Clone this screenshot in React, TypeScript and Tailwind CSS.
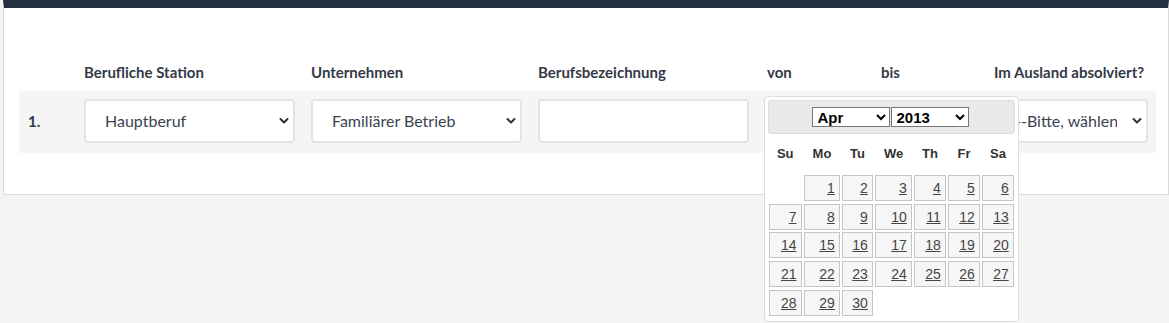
import { useState } from 'react';

const months = ['Jan', 'Feb', 'Mar', 'Apr', 'May', 'Jun', 'Jul', 'Aug', 'Sep', 'Oct', 'Nov', 'Dec'];
const years = Array.from({ length: 30 }, (_, i) => 2000 + i);
const weekdays = ['Su', 'Mo', 'Tu', 'We', 'Th', 'Fr', 'Sa'];

// April 2013 starts on a Monday
const days: (number | null)[] = [null, ...Array.from({ length: 30 }, (_, i) => i + 1)];

function Chevron() {
  return (
    <svg
      className="pointer-events-none absolute right-[6px] top-1/2 -translate-y-1/2"
      width="10"
      height="7"
      viewBox="0 0 10 7"
      fill="none"
    >
      <path d="M1.5 1.5L5 5l3.5-3.5" stroke="#2b3340" strokeWidth="2" strokeLinecap="round" strokeLinejoin="round" />
    </svg>
  );
}

function SelectBox({ value, options, pr = 'pr-[36px]' }: { value: string; options: string[]; pr?: string }) {
  return (
    <div className="relative w-full">
      <select
        defaultValue={value}
        className={`h-[44px] w-full appearance-none rounded-[4px] border-2 border-[#dfe5ec] bg-white pl-[19px] ${pr} text-[16px] text-[#3a4352] outline-none`}
      >
        {options.map((o) => (
          <option key={o}>{o}</option>
        ))}
      </select>
      <Chevron />
    </div>
  );
}

function DatePicker() {
  const [month, setMonth] = useState('Apr');
  const [year, setYear] = useState('2013');
  return (
    <div className="absolute left-[5px] top-0 z-10 w-[255px] rounded-[4px] border border-[#dddddd] bg-white p-[3px] pb-[5px] font-['Liberation_Sans',Arial,sans-serif] text-[#333333]">
      <div className="flex h-[34px] items-center justify-center gap-[1px] rounded-[3px] border border-[#dddddd] bg-[#e9e9e9] pr-[3px]">
        <select
          value={month}
          onChange={(e) => setMonth(e.target.value)}
          className="h-[20px] w-[78px] border border-[#767676] bg-white pl-[1px] text-[15px] font-bold text-black"
        >
          {months.map((m) => (
            <option key={m}>{m}</option>
          ))}
        </select>
        <select
          value={year}
          onChange={(e) => setYear(e.target.value)}
          className="h-[20px] w-[78px] border border-[#767676] bg-white pl-[1px] text-[15px] font-bold text-black"
        >
          {years.map((y) => (
            <option key={y}>{y}</option>
          ))}
        </select>
      </div>
      <div className="grid h-[40px] grid-cols-[32.5px_35.7px_30.4px_36.4px_31.4px_31.4px_31.4px] items-center gap-x-[2.6px] pl-[1px] text-[13px] font-bold">
        {weekdays.map((d) => (
          <div key={d} className="text-center">
            {d}
          </div>
        ))}
      </div>
      <div className="mt-[1px] grid grid-cols-[32.5px_35.7px_30.4px_36.4px_31.4px_31.4px_31.4px] gap-x-[2.6px] gap-y-[2.7px] pl-[1px]">
        {days.map((d, i) =>
          d === null ? (
            <div key={i} className="h-[26px]" />
          ) : (
            <a
              key={i}
              href="#"
              className="h-[26px] border border-[#c5c5c5] bg-[#f6f6f6] pr-[4px] text-right text-[14px] leading-[24px] text-[#454545] underline"
            >
              {d}
            </a>
          )
        )}
      </div>
    </div>
  );
}

export default function App() {
  return (
    <div className="h-[323px] w-[1169px] overflow-hidden bg-[#f4f4f4] font-['Lato','Noto_Sans',sans-serif]">
      <div className="ml-[3px] w-[1166px] border border-t-8 border-[#dadada] border-t-[#253142] bg-white pb-[41px] pl-[15px] pt-[52px]">
        {/* header */}
        <div className="flex h-[24px] items-center whitespace-nowrap text-[15px] font-bold text-[#333a47]">
          <div className="w-[57px]" />
          <div className="w-[227px] px-2">Berufliche Station</div>
          <div className="w-[227px] px-2">Unternehmen</div>
          <div className="w-[229px] px-2">Berufsbezeichnung</div>
          <div className="w-[114px] px-2">von</div>
          <div className="w-[113px] px-2">bis</div>
          <div className="w-[170px] px-2">Im Ausland absolviert?</div>
        </div>

        {/* row */}
        <div className="mt-[7px] flex w-[1137px] items-center bg-[#f5f5f5] pb-[10px] pt-[8px]">
          <div className="w-[57px] pl-[9px] text-[15px] font-bold text-[#333a47]">1.</div>
          <div className="w-[227px] px-2">
            <SelectBox value="Hauptberuf" options={['Hauptberuf', 'Nebenberuf']} />
          </div>
          <div className="w-[227px] px-2">
            <SelectBox value="Familiärer Betrieb" options={['Familiärer Betrieb', 'Fremdbetrieb']} />
          </div>
          <div className="w-[229px] px-2">
            <input className="h-[44px] w-[211px] rounded-[4px] border-2 border-[#dfe5ec] bg-white px-3 text-[16px] outline-none" />
          </div>
          <div className="relative w-[114px] px-2">
            <input className="h-[44px] w-full rounded-[4px] border-2 border-[#dfe5ec] bg-white px-3 text-[16px] outline-none" />
            <div className="absolute left-0 top-[-3px]">
              <DatePicker />
            </div>
          </div>
          <div className="w-[113px] px-2">
            <input className="h-[44px] w-full rounded-[4px] border-2 border-[#dfe5ec] bg-white px-3 text-[16px] outline-none" />
          </div>
          <div className="w-[170px] px-2">
            <SelectBox value="--Bitte, wählen--" options={['--Bitte, wählen--', 'Ja', 'Nein']} pr="pr-[29px]" />
          </div>
        </div>
      </div>
    </div>
  );
}
